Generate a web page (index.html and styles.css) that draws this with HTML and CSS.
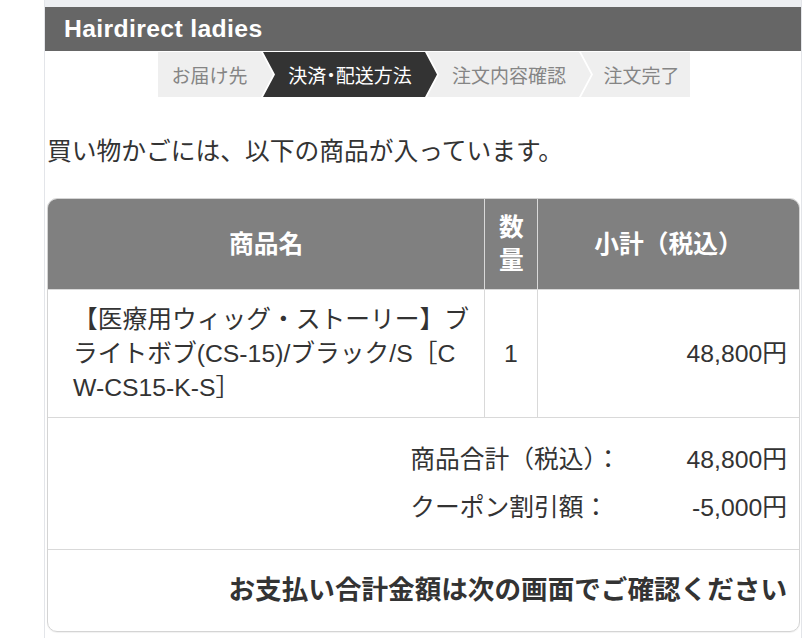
FILE: index.html
```html
<!DOCTYPE html>
<html lang="ja">
<head>
<meta charset="utf-8">
<title>Hairdirect ladies - カート</title>
<link rel="stylesheet" href="styles.css">
</head>
<body>
<div class="page">
  <div class="top-strip"></div>
  <header class="shop-header">Hairdirect ladies</header>
  <nav class="steps">
    <div class="step step-first">お届け先</div>
    <div class="step step-mid step-2 active">決済・配送方法</div>
    <div class="step step-mid step-3">注文内容確認</div>
    <div class="step step-last">注文完了</div>
  </nav>
  <main class="content">
    <p class="lead">買い物かごには、以下の商品が入っています。</p>
    <div class="cart">
      <table class="cart-table">
        <thead>
          <tr>
            <th class="c-name">商品名</th>
            <th class="c-qty">数量</th>
            <th class="c-sub">小計（税込）</th>
          </tr>
        </thead>
        <tbody>
          <tr>
            <td class="c-name">【医療用ウィッグ・ストーリー】ブライトボブ(CS-15)/ブラック/S［CW-CS15-K-S］</td>
            <td class="c-qty">1</td>
            <td class="c-sub">48,800円</td>
          </tr>
        </tbody>
      </table>
      <div class="totals">
        <span class="t-label">商品合計（税込）：</span><span class="t-value">48,800円</span>
        <span class="t-label">クーポン割引額：</span><span class="t-value">-5,000円</span>
      </div>
      <div class="notice">お支払い合計金額は次の画面でご確認ください</div>
    </div>
  </main>
</div>
</body>
</html>
```
FILE: styles.css
```css
* { box-sizing: border-box; }

html, body {
  margin: 0;
  padding: 0;
  background: #fff;
}

body {
  font-family: "Liberation Sans", "Noto Sans CJK JP", sans-serif;
  color: #333;
  font-size: 24.75px;
}

.page {
  margin-left: 44px;
  width: 758px;
  min-height: 638px;
  border-left: 1px solid #e3e5e9;
  border-right: 1px solid #e3e5e9;
}

.top-strip {
  height: 7px;
  background: #edeff2;
}

.shop-header {
  height: 44px;
  background: #666;
  color: #fff;
  font-weight: bold;
  font-size: 24.75px;
  letter-spacing: 0.35px;
  line-height: 44px;
  padding-left: 19px;
}

.steps {
  margin-top: 1px;
  padding-left: 2px;
  display: flex;
  justify-content: center;
  height: 45px;
}

.step {
  display: flex;
  align-items: center;
  justify-content: center;
  height: 45px;
  background: #efefef;
  color: #858585;
  font-size: 19px;
  font-feature-settings: "halt";
}

.step + .step { margin-left: -10px; }

.step-first {
  width: 115px;
  padding-right: 12px;
  clip-path: polygon(0 0, calc(100% - 12px) 0, 100% 50%, calc(100% - 12px) 100%, 0 100%);
}

.step-mid {
  clip-path: polygon(0 0, calc(100% - 12px) 0, 100% 50%, calc(100% - 12px) 100%, 0 100%, 12px 50%);
}

.step-2 { width: 174px; }
.step-3 { width: 164px; }

.step-last {
  width: 109px;
  padding-left: 12px;
  clip-path: polygon(0 0, 100% 0, 100% 100%, 0 100%, 12px 50%);
}

.step.active {
  background: #333;
  color: #fff;
}

.content {
  padding: 0 1px 0 2px;
}

.lead {
  margin: 38px 0 29px;
  line-height: 34px;
}

.cart {
  border: 1px solid #d4d4d4;
  border-radius: 10px;
  overflow: hidden;
  box-shadow: 0 1px 1px rgba(0, 0, 0, 0.06);
}

.cart-table {
  width: 100%;
  border-collapse: separate;
  border-spacing: 0;
  table-layout: fixed;
}

.cart-table th,
.cart-table td {
  border-right: 1px solid #d9d9d9;
  border-bottom: 1px solid #d9d9d9;
}

.cart-table th:last-child,
.cart-table td:last-child { border-right: 0; }

.cart-table th {
  background: #808080;
  color: #fff;
  font-weight: bold;
  line-height: 33px;
  padding: 12px 0;
  text-align: center;
  vertical-align: middle;
}

.cart-table th.c-qty { padding: 12px 14px; }

.c-name { width: 437px; }
.c-qty { width: 53px; }

.cart-table td {
  line-height: 34px;
  padding: 13px 0 12px;
  vertical-align: middle;
}

.cart-table td.c-name {
  padding-left: 25px;
  padding-right: 11px;
  word-break: break-all;
}

.cart-table td.c-qty { text-align: center; }

.cart-table td.c-sub {
  text-align: right;
  padding-right: 12px;
}

.totals {
  display: grid;
  grid-template-columns: auto auto;
  justify-content: end;
  column-gap: 66px;
  padding: 18px 12px 17px 0;
  line-height: 48px;
  border-bottom: 1px solid #d9d9d9;
}

.t-value { text-align: right; }

.notice {
  height: 81px;
  line-height: 81px;
  text-align: right;
  padding-right: 12px;
  font-weight: bold;
  font-size: 26.6px;
}
```
